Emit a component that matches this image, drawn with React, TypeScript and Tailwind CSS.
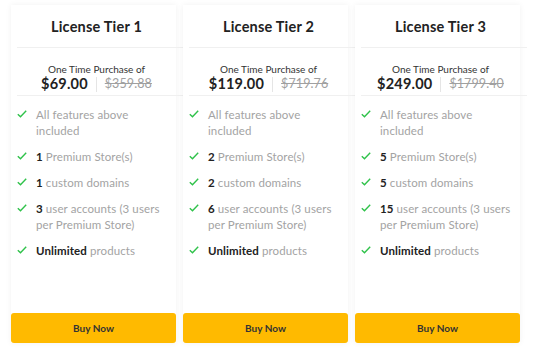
import React from 'react';

type Tier = {
  name: string;
  price: string;
  was: string;
  stores: string;
  domains: string;
  users: string;
};

const tiers: Tier[] = [
  { name: 'License Tier 1', price: '$69.00', was: '$359.88', stores: '1', domains: '1', users: '3' },
  { name: 'License Tier 2', price: '$119.00', was: '$719.76', stores: '2', domains: '2', users: '6' },
  { name: 'License Tier 3', price: '$249.00', was: '$1799.40', stores: '5', domains: '5', users: '15' },
];

function Check() {
  return (
    <svg width="10" height="8" viewBox="0 0 10 8" className="mt-[3px] shrink-0">
      <polyline points="0.8,4.2 3.5,6.8 9.2,0.8" fill="none" stroke="#2fc24a" strokeWidth="1.4" />
    </svg>
  );
}

function Feature({ children }: { children: React.ReactNode }) {
  return (
    <li className="flex gap-[9px]">
      <Check />
      <span className="text-[11.5px] leading-[16px] tracking-[0.1px] text-[#a3a3a3]">{children}</span>
    </li>
  );
}

function Card({ tier }: { tier: Tier }) {
  return (
    <div className="flex w-[165px] flex-col bg-white shadow-[0_0_6px_rgba(0,0,0,0.06)]">
      <h3 className="ml-[6px] mr-[-7px] flex h-[43px] items-center justify-center border-b border-[#f0f0f0] pr-[7px] pt-[2px] text-[14.5px] font-bold tracking-[0.2px] text-[#222]">
        {tier.name}
      </h3>
      <div className="ml-[6px] mr-[-7px] flex h-[48px] flex-col items-center justify-center border-b border-[#f0f0f0] pr-[7px] pt-[13px]">
        <div className="text-[10px] leading-[12px] text-[#333]">One Time Purchase of</div>
        <div className="flex items-center">
          <span className="text-[14.5px] font-bold leading-[18px] tracking-[0.2px] text-[#222]">{tier.price}</span>
          <span className="mx-[8px] h-[15px] w-px bg-[#e5e5e5]" />
          <span className="text-[12.5px] leading-[18px] tracking-[0.1px] text-[#a0a0a0] line-through">{tier.was}</span>
        </div>
      </div>
      <ul className="flex flex-1 flex-col gap-[10px] pl-[6px] pr-[4px] pt-[11px]">
        <Feature>All features above included</Feature>
        <Feature>
          <b className="font-bold text-[#222]">{tier.stores}</b> Premium Store(s)
        </Feature>
        <Feature>
          <b className="font-bold text-[#222]">{tier.domains}</b> custom domains
        </Feature>
        <Feature>
          <b className="font-bold text-[#222]">{tier.users}</b> user accounts (3 users per Premium Store)
        </Feature>
        <Feature>
          <b className="font-bold text-[#222]">Unlimited</b> products
        </Feature>
      </ul>
      <button className="h-[30px] rounded-[3px] bg-[#ffba00] text-[10px] font-bold text-[#333]">Buy Now</button>
    </div>
  );
}

export default function App() {
  return (
    <div
      className="flex h-[349px] w-[533px] gap-[7px] bg-white pl-[11px] pt-[5px] pb-[6px]"
      style={{ fontFamily: 'Lato, Arial, sans-serif' }}
    >
      {tiers.map((t) => (
        <Card key={t.name} tier={t} />
      ))}
    </div>
  );
}
